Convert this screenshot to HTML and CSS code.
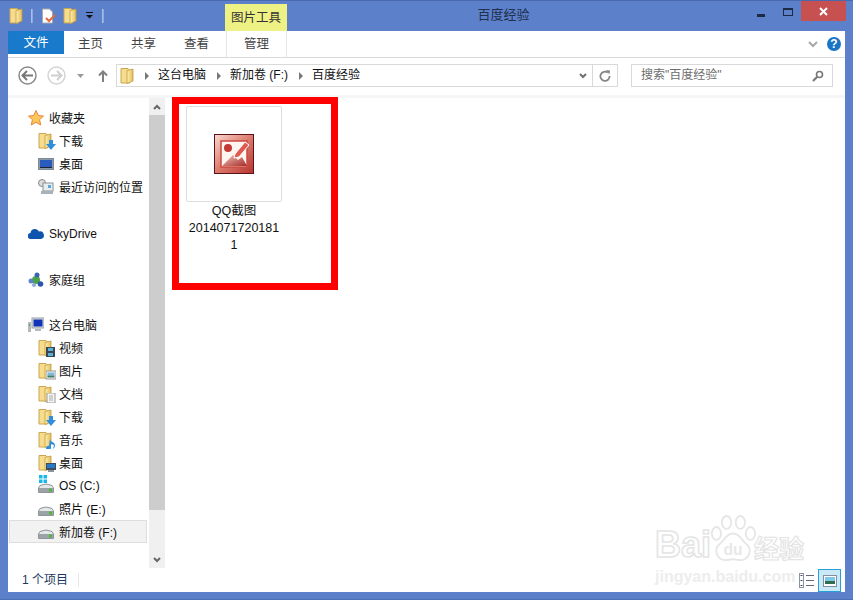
FILE: index.html
```html
<!DOCTYPE html>
<html lang="zh">
<head>
<meta charset="utf-8">
<title>百度经验</title>
<link rel="stylesheet" href="styles.css">
</head>
<body>
<svg class="defs" width="0" height="0">
  <defs>
    <linearGradient id="fg" x1="0" y1="0" x2="1" y2="0"><stop offset="0" stop-color="#fff0b0"/><stop offset="1" stop-color="#e3bd5c"/></linearGradient>
    <symbol id="folder" viewBox="0 0 14 16">
      <path d="M1 .5h7l1.500 1.500v13H1z" fill="#f6dc8e" stroke="#c9a650"/>
      <path d="M7 2.500l6 -1.500v12l-6 2.500z" fill="url(#fg)" stroke="#c49a3e" stroke-width=".8"/>
    </symbol>
    <symbol id="drive" viewBox="0 0 16 10">
      <path d="M2 2.500q6 -3 12 0l1.500 2.500v4.500h-15v-4.500z" fill="#e6e8e8" stroke="#8d9599"/>
      <rect x="1" y="5" width="14" height="4" fill="#9aa3a6"/>
      <rect x="11" y="5.500" width="3" height="3" fill="#52b33d"/>
    </symbol>
    <symbol id="dl" viewBox="0 0 10 10"><path d="M3 0h4v4h3l-5 6-5-6h3z" fill="#2f8fdc"/></symbol>
  </defs>
</svg>
<div class="window">
  <header class="titlebar">
    <div class="qat">
      <svg class="i14" viewBox="0 0 14 16"><use href="#folder"/></svg>
      <span class="qsep"></span>
      <svg class="i15" viewBox="0 0 15 16"><path d="M1.500 1h7l3 3v11h-10z" fill="#fff" stroke="#aaa"/><path d="M5 10l3 3 6-6" fill="none" stroke="#e8683a" stroke-width="2"/></svg>
      <svg class="i14 q3" viewBox="0 0 14 16"><use href="#folder"/></svg>
      <svg class="i8" viewBox="0 0 8 7"><rect width="7" height="1" fill="#111"/><path d="M0 3h7l-3.500 3.500z" fill="#111"/></svg>
      <span class="qsep q5"></span>
    </div>
    <div class="ctx">图片工具</div>
    <div class="title">百度经验</div>
    <div class="wctl">
      <span class="wbtn"><span class="min"></span></span>
      <span class="wbtn"><span class="max"></span></span>
      <span class="close"><svg width="9" height="9" viewBox="0 0 9 9"><path d="M1 1l7 7M8 1l-7 7" stroke="#fff" stroke-width="2"/></svg></span>
    </div>
  </header>
  <main class="frame">
    <nav class="tabs">
      <div class="tab file">文件</div>
      <div class="tab t1">主页</div>
      <div class="tab t2">共享</div>
      <div class="tab t3">查看</div>
      <div class="tab manage">管理</div>
      <div class="tabs-end">
        <svg width="10" height="7" viewBox="0 0 10 7"><path d="M1 1l4 4 4-4" fill="none" stroke="#a8a8a8" stroke-width="2"/></svg>
        <span class="help">?</span>
      </div>
    </nav>
    <div class="addr">
      <svg class="back" width="19" height="19" viewBox="0 0 19 19"><circle cx="9.500" cy="9.500" r="8.500" fill="#fff" stroke="#8a8a8a" stroke-width="1.500"/><path d="M15 9.500H5M9 5L4.500 9.500 9 14" fill="none" stroke="#777" stroke-width="2"/></svg>
      <svg class="fwd" width="19" height="19" viewBox="0 0 19 19"><circle cx="9.500" cy="9.500" r="8.500" fill="#fff" stroke="#d4d4d4" stroke-width="1.500"/><path d="M4 9.500h10M10 5l4.500 4.500L10 14" fill="none" stroke="#d0d0d0" stroke-width="2"/></svg>
      <svg class="drop" width="7" height="4" viewBox="0 0 7 4"><path d="M0 0h7L3.500 4z" fill="#9a9a9a"/></svg>
      <svg class="up" width="10" height="12" viewBox="0 0 10 12"><path d="M5 12V2M1 5.500l4-4 4 4" fill="none" stroke="#808080" stroke-width="2"/></svg>
      <div class="crumbs">
        <svg class="i14" viewBox="0 0 14 16"><use href="#folder"/></svg>
        <span class="arr"></span><span class="ct">这台电脑</span>
        <span class="arr"></span><span class="ct">新加卷 (F:)</span>
        <span class="arr"></span><span class="ct">百度经验</span>
        <svg class="chev" width="8" height="6" viewBox="0 0 8 6"><path d="M1 1l3 3 3-3" fill="none" stroke="#707070" stroke-width="2"/></svg>
        <span class="refresh"><svg width="12" height="12" viewBox="0 0 12 12"><path d="M8.800 2.600A4.600 4.600 0 1 0 10.600 6" fill="none" stroke="#858585" stroke-width="1.800"/><path d="M7 0l4 .5-.5 4z" fill="#858585"/></svg></span>
      </div>
      <div class="search">
        <span class="ct">搜索"百度经验"</span>
        <svg width="12" height="12" viewBox="0 0 12 12"><circle cx="7.500" cy="4.500" r="3" fill="none" stroke="#777" stroke-width="1.600"/><path d="M5 7l-4 4" stroke="#777" stroke-width="2.200"/></svg>
      </div>
    </div>
    <div class="body">
      <aside class="side">
        <div class="side-main">
          <div class="tree">
            <div class="row top"><svg class="ic" viewBox="0 0 16 16"><path d="M8 .5l2.300 5 5.200.6-3.900 3.500 1.100 5.400L8 12.300 3.300 15l1.100-5.400L.5 6.100l5.200-.6z" fill="#fcc65a" stroke="#e8853a"/></svg>收藏夹</div>
            <div class="row sub"><span class="fi"><svg viewBox="0 0 14 16"><use href="#folder"/></svg><svg class="ov" viewBox="0 0 10 10"><use href="#dl"/></svg></span>下载</div>
            <div class="row sub"><svg class="ic mon" viewBox="0 0 16 12"><rect x=".5" y=".5" width="15" height="11" fill="#8b98a8" stroke="#7d8a9a"/><rect x="2" y="2" width="12" height="7" fill="#2a5cbe"/><rect x="2" y="9" width="12" height="1" fill="#223"/></svg>桌面</div>
            <div class="row sub"><svg class="ic" viewBox="0 0 16 16"><circle cx="4" cy="4" r="3.500" fill="#ddd" stroke="#888"/><rect x="5" y="4" width="10" height="8" fill="#e8eef0" stroke="#8a9298"/><rect x="3" y="12" width="12" height="3" fill="#a9b2b6"/><rect x="10" y="6" width="3" height="3" fill="#5aa7d8"/></svg>最近访问的位置</div>
            <div class="row top gap"><svg class="ic cloud" viewBox="0 0 16 11"><path d="M3 11a3 3 0 0 1-.5-6A4.500 4.500 0 0 1 11 3.500 3.800 3.800 0 0 1 13 11z" fill="#0f55ad"/></svg>SkyDrive</div>
            <div class="row top gap2"><svg class="ic" viewBox="0 0 16 16"><circle cx="8" cy="8" r="4" fill="#4aa544"/><circle cx="9" cy="3" r="2.500" fill="#3c62b8"/><circle cx="3" cy="9" r="2.500" fill="#5f82cf"/><circle cx="12.500" cy="12" r="2.800" fill="#2e55ad"/><circle cx="6" cy="13" r="2" fill="#8fa8dd"/></svg>家庭组</div>
            <div class="row top gap3"><svg class="ic" viewBox="0 0 16 16"><rect x="0" y="5" width="3" height="10" fill="#b5b9b9"/><rect x="1" y="7" width="1" height="2" fill="#4caf50"/><rect x="4" y="1" width="12" height="10" fill="#d7dde0" stroke="#9aa0a3"/><rect x="5.500" y="2.500" width="9" height="7" fill="#1232b8"/><rect x="7" y="12" width="6" height="2" fill="#b4b9bc"/></svg>这台电脑</div>
            <div class="row sub"><span class="fi"><svg viewBox="0 0 14 16"><use href="#folder"/></svg><svg class="ov" viewBox="0 0 10 10"><rect width="9" height="10" fill="#3a4650"/><rect x="2" y="1" width="5" height="3" fill="#59b0d8"/><rect x="2" y="6" width="5" height="3" fill="#59b0d8"/></svg></span>视频</div>
            <div class="row sub"><span class="fi"><svg viewBox="0 0 14 16"><use href="#folder"/></svg><svg class="ov" viewBox="0 0 10 10"><rect y="1" width="10" height="8" fill="#f2f2f2" stroke="#999"/><rect x="1.500" y="2.500" width="7" height="3" fill="#7fb8d8"/><rect x="1.500" y="5.500" width="7" height="2" fill="#3f7f6a"/></svg></span>图片</div>
            <div class="row sub"><span class="fi"><svg viewBox="0 0 14 16"><use href="#folder"/></svg><svg class="ov" viewBox="0 0 10 10"><rect x="1" width="8" height="10" fill="#f5f6f6" stroke="#999"/><path d="M3 3h4M3 5h4M3 7h4" stroke="#aaa"/></svg></span>文档</div>
            <div class="row sub"><span class="fi"><svg viewBox="0 0 14 16"><use href="#folder"/></svg><svg class="ov" viewBox="0 0 10 10"><use href="#dl"/></svg></span>下载</div>
            <div class="row sub"><span class="fi"><svg viewBox="0 0 14 16"><use href="#folder"/></svg><svg class="ov" viewBox="0 0 10 10"><path d="M4 0c0 3 5 3 5 6 0 2-1 3-2 4l1-4-3-1v4a2.500 2 0 1 1-2-2z" fill="#2f8fdc"/></svg></span>音乐</div>
            <div class="row sub"><span class="fi"><svg viewBox="0 0 14 16"><use href="#folder"/></svg><svg class="ov" viewBox="0 0 10 10"><rect y="1" width="10" height="7" fill="#3f4c5c"/><rect x="1" y="2" width="8" height="4" fill="#2a78c8"/><rect x="2" y="8" width="6" height="2" fill="#8a949c"/></svg></span>桌面</div>
            <div class="row sub"><span class="drv"><svg class="d" viewBox="0 0 16 10"><use href="#drive"/></svg><svg class="win" viewBox="0 0 8 8"><path d="M0 0h3.500v3.500H0zM4.500 0H8v3.500H4.500zM0 4.500h3.500V8H0zM4.500 4.500H8V8H4.500z" fill="#18b8e8"/></svg></span>OS (C:)</div>
            <div class="row sub"><span class="drv"><svg class="d" viewBox="0 0 16 10"><use href="#drive"/></svg></span>照片 (E:)</div>
            <div class="row sub sel"><span class="drv"><svg class="d" viewBox="0 0 16 10"><use href="#drive"/></svg></span>新加卷 (F:)</div>
          </div>
          <div class="sbar">
            <span class="sb-btn"><svg width="8" height="6" viewBox="0 0 8 6"><path d="M1 5l3-3 3 3" fill="none" stroke="#666" stroke-width="2"/></svg></span>
            <span class="thumb"></span>
            <span class="sb-btn dn"><svg width="8" height="6" viewBox="0 0 8 6"><path d="M1 1l3 3 3-3" fill="none" stroke="#666" stroke-width="2"/></svg></span>
          </div>
        </div>
        <footer class="status"><span class="count">1 个项目</span></footer>
      </aside>
      <section class="files">
        <div class="item">
          <div class="tile">
            <svg width="40" height="40" viewBox="0 0 40 40">
              <defs><linearGradient id="bk" x1="0" y1="0" x2="1" y2="1"><stop offset="0" stop-color="#f8d8cf"/><stop offset=".5" stop-color="#dd7a6e"/><stop offset="1" stop-color="#b5342e"/></linearGradient>
              <linearGradient id="mt" x1="0" y1="0" x2="1" y2="1"><stop offset="0" stop-color="#f8c7bd"/><stop offset="1" stop-color="#a22a28"/></linearGradient></defs>
              <rect x=".5" y=".5" width="39" height="39" fill="url(#bk)" stroke="#5a1418"/>
              <rect x="7" y="7" width="26" height="26" fill="#fff4ef" stroke="#cc4a40" stroke-width="1.500"/>
              <circle cx="14" cy="14" r="4" fill="#c23a36"/>
              <path d="M8 32l11-11 5 5 4-3 5 9z" fill="url(#mt)"/>
              <path d="M21 20l10-12 4 3-10 12-5 1z" fill="#e05a50" stroke="#fff"/>
            </svg>
          </div>
          <div class="name">QQ截图<br>2014071720181<br>1</div>
        </div>
        <div class="mark"></div>
        <div class="wm">
          <div class="wm-top">
            <span class="wm-en">Bai</span>
            <svg class="paw" width="46" height="48" viewBox="0 0 50 52" fill="#fff" stroke="#e6e6e6" stroke-width="2">
              <ellipse cx="7" cy="20" rx="5" ry="7"/><ellipse cx="18" cy="8" rx="5" ry="7"/><ellipse cx="33" cy="8" rx="5" ry="7"/><ellipse cx="44" cy="20" rx="5" ry="7"/>
              <path d="M25 20c8 0 9 8 15 12 6 5 3 17-7 17-4 0-5-1-8-1s-4 1-8 1c-10 0-13-12-7-17 6-4 7-12 15-12z"/>
              <text x="25" y="43" font-size="17" fill="#e8e8e8" stroke="none" text-anchor="middle" font-family="Liberation Sans, sans-serif" font-weight="700">du</text>
            </svg>
            <span class="cn">经验</span>
          </div>
          <div class="wm-url">jingyan.baidu.com</div>
        </div>
        <div class="views">
          <svg width="15" height="15" viewBox="0 0 15 15"><rect x=".5" y=".5" width="4" height="14" fill="#fff" stroke="#8a94a8"/><path d="M1.500 2.500h2M1.500 7.500h2M1.500 12.500h2" stroke="#445"/><path d="M7 2.500h8M7 7.500h8M7 12.500h8" stroke="#667"/></svg>
          <span class="vbtn"><svg width="14" height="12" viewBox="0 0 14 12"><rect x=".5" y=".5" width="13" height="11" fill="#fff" stroke="#8090a0"/><rect x="2" y="2" width="10" height="4" fill="#7fc8e8"/><rect x="2" y="6" width="10" height="3" fill="#2f6d4e"/></svg></span>
        </div>
      </section>
    </div>
  </main>
</div>
</body>
</html>
```
FILE: styles.css
```css
* { box-sizing: border-box; }
html, body { margin: 0; padding: 0; height: 100%; }
body { width: 853px; height: 600px; overflow: hidden; font-family: "Liberation Sans", "Noto Sans CJK SC", sans-serif; font-size: 12px; color: #000; }
.defs { display: block; position: absolute; }
.window { width: 853px; height: 600px; background: #5d80cb; border-top: 1px solid #4a68ad; border-bottom: 1px solid #4f6fb5; display: flex; flex-direction: column; }
.titlebar { height: 30px; display: flex; position: relative; flex: none; }
.qat { display: flex; align-items: center; height: 29px; padding-left: 9px; gap: 6px; }
.i14 { width: 14px; height: 16px; flex: none; }
.i15 { width: 15px; height: 16px; flex: none; }
.i8 { width: 8px; height: 7px; margin-left: 3px; }
.q3 { margin-left: 1px; }
.q5 { margin-left: 4px; }
.qsep { width: 2px; height: 14px; background: #8fa8dc; border-left: 1px solid #a9bde6; margin: 0 2px; }
.ctx { position: absolute; left: 225px; top: 3px; width: 62px; height: 27px; background: #eef184; text-align: center; line-height: 28px; font-size: 12.500px; color: #333; }
.title { position: absolute; left: 154px; right: 0; top: 3px; text-align: center; font-size: 13px; color: #20304e; }
.wctl { position: absolute; right: 7px; top: 0; height: 20px; display: flex; align-items: flex-start; }
.wbtn { width: 27px; height: 20px; display: flex; align-items: center; justify-content: center; }
.min { width: 8px; height: 3px; background: #1c2a44; margin-top: 8px; }
.max { width: 10px; height: 8px; border: 1px solid #1c2a44; border-top-width: 2px; margin-top: 1px; }
.close { width: 45px; height: 20px; background: #c75050; display: flex; align-items: center; justify-content: center; }
.frame { margin: 0 8px 7px; width: 837px; flex: 1; min-height: 0; background: #fff; display: flex; flex-direction: column; }
.tabs { height: 27px; display: flex; flex: none; border-bottom: 1px solid #dadada; }
.tab { height: 23px; line-height: 26px; text-align: center; font-size: 12.500px; color: #444; }
.file { width: 56px; background: #1979ca; color: #fff; line-height: 24px; }
.t1, .t2, .t3 { width: 53px; }
.manage { width: 61px; height: 26px; margin-left: 3px; border: 1px solid #e6e6e6; border-top: 0; border-bottom: 0; }
.tabs-end { margin-left: auto; display: flex; align-items: center; gap: 9px; padding-right: 4px; height: 26px; }
.help { width: 14px; height: 14px; border-radius: 50%; background: #1b75c6; color: #fff; font-weight: 700; font-size: 12px; line-height: 14px; text-align: center; }
.addr { height: 37px; flex: none; display: flex; align-items: center; padding-bottom: 2px; }
.back { margin-left: 10px; flex: none; }
.fwd { margin-left: 10px; flex: none; }
.drop { margin-left: 11px; flex: none; }
.up { margin-left: 14px; flex: none; }
.crumbs { margin-left: 8px; width: 502px; height: 23px; border: 1px solid #d9d9d9; display: flex; align-items: center; padding-left: 3px; font-size: 12px; color: #111; flex: none; }
.ct { line-height: 20px; padding-bottom: 3px; height: 21px; }
.arr { width: 0; height: 0; border-left: 4px solid #777; border-top: 4px solid transparent; border-bottom: 4px solid transparent; margin: 0 9px 0 11px; flex: none; }
.chev { margin-left: auto; margin-right: 5px; }
.refresh { width: 25px; height: 21px; border-left: 1px solid #d9d9d9; display: flex; align-items: center; justify-content: center; }
.search { margin-left: 13px; width: 202px; height: 23px; border: 1px solid #d9d9d9; display: flex; align-items: center; justify-content: space-between; padding: 0 8px 0 9px; color: #6d6d6d; font-size: 12px; flex: none; }
.body { flex: 1; min-height: 0; display: flex; }
.side { width: 157px; display: flex; flex-direction: column; flex: none; border-top: 3px solid #f5f6f7; }
.side-main { height: 470px; display: flex; flex: none; }
.tree { width: 141px; padding-top: 8px; }
.row { height: 23px; display: flex; align-items: center; font-size: 12px; white-space: nowrap; color: #111; }
.top { padding-left: 20px; gap: 5px; }
.sub { padding-left: 30px; gap: 5px; }
.gap { margin-top: 24px; }
.gap2 { margin-top: 23px; }
.gap3 { margin-top: 22px; }
.ic { width: 16px; height: 16px; flex: none; }
.mon { height: 12px; }
.cloud { height: 11px; }
.fi { width: 16px; height: 16px; position: relative; flex: none; }
.fi > svg { width: 14px; height: 16px; display: block; }
.fi .ov { position: absolute; right: -2px; bottom: -1px; width: 10px; height: 10px; }
.drv { width: 16px; height: 16px; position: relative; flex: none; }
.drv .d { position: absolute; left: 0; bottom: 1px; width: 16px; height: 10px; }
.drv .win { position: absolute; left: 1px; top: -3px; width: 8px; height: 8px; }
.sel { margin-left: 1px; margin-right: 2px; padding-left: 28px; background: #f2f2f2; border: 1px solid #dedede; }
.sbar { width: 16px; background: #f0f0f0; display: flex; flex-direction: column; }
.sb-btn { height: 17px; flex: none; display: flex; align-items: center; justify-content: center; }
.thumb { height: 395px; background: #cdcdcd; flex: none; }
.dn { margin-top: auto; }
.status { height: 24px; flex: none; display: flex; align-items: center; padding-left: 14px; color: #1d3a5f; font-size: 12px; }
.count { padding-right: 10px; border-right: 1px solid #e6e6e6; line-height: 14px; }
.files { flex: 1; border-top: 3px solid #f5f6f7; padding: 8px 0 0 21px; position: relative; }
.item { width: 96px; text-align: center; }
.tile { width: 96px; height: 96px; border: 1px solid #dedede; border-radius: 2px; display: flex; align-items: center; justify-content: center; }
.name { font-size: 12.500px; line-height: 17px; padding-top: 1px; color: #111; }
.mark { position: absolute; left: 7px; top: -1px; width: 166px; height: 193px; border: 7px solid #f00; }
.wm { position: absolute; left: 490px; top: 417px; width: 160px; pointer-events: none; }
.wm-top { display: flex; align-items: flex-end; gap: 0; }
.wm-en { font-family: "Liberation Sans", sans-serif; font-size: 36px; font-weight: 700; line-height: 36px; color: #fff; -webkit-text-stroke: 1.500px #e4e4e4; margin-right: -1px; }
.wm-top .cn { font-family: "Noto Sans CJK SC", sans-serif; font-size: 25px; font-weight: 700; line-height: 32px; color: #fff; -webkit-text-stroke: 1.200px #e4e4e4; margin-left: -2px; }
.wm-url { font-size: 16px; line-height: 22px; color: #ededed; font-weight: 700; margin-top: 3px; white-space: nowrap; }
.views { position: absolute; right: 4px; bottom: 0; display: flex; align-items: center; gap: 4px; }
.vbtn { width: 23px; height: 23px; border: 1px solid #26a0da; background: #cbe8f6; display: flex; align-items: center; justify-content: center; }
```
